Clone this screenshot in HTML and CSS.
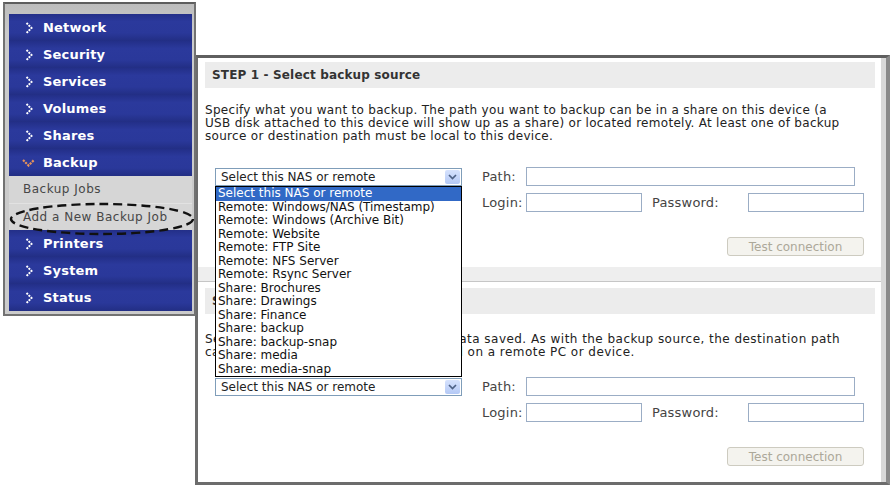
FILE: index.html
```html
<!DOCTYPE html>
<html lang="en">
<head>
<meta charset="utf-8">
<title>Add a New Backup Job</title>
<link rel="stylesheet" href="styles.css">
</head>
<body>
<div class="page">
  <nav class="sidebar">
    <ul class="menu">
      <li class="menu-item"><svg class="chev" viewBox="0 0 8 12"><polyline points="1.5,1 6.5,6 1.5,11"/></svg>Network</li>
      <li class="menu-item"><svg class="chev" viewBox="0 0 8 12"><polyline points="1.5,1 6.5,6 1.5,11"/></svg>Security</li>
      <li class="menu-item"><svg class="chev" viewBox="0 0 8 12"><polyline points="1.5,1 6.5,6 1.5,11"/></svg>Services</li>
      <li class="menu-item"><svg class="chev" viewBox="0 0 8 12"><polyline points="1.5,1 6.5,6 1.5,11"/></svg>Volumes</li>
      <li class="menu-item"><svg class="chev" viewBox="0 0 8 12"><polyline points="1.5,1 6.5,6 1.5,11"/></svg>Shares</li>
      <li class="menu-item menu-item--open"><svg class="chev-down" viewBox="0 0 13 8"><polyline points="1,1 6.5,6.5 12,1"/></svg>Backup</li>
      <li class="sub-item">Backup Jobs</li>
      <li class="sub-item">Add a New Backup Job</li>
      <li class="menu-item"><svg class="chev" viewBox="0 0 8 12"><polyline points="1.5,1 6.5,6 1.5,11"/></svg>Printers</li>
      <li class="menu-item"><svg class="chev" viewBox="0 0 8 12"><polyline points="1.5,1 6.5,6 1.5,11"/></svg>System</li>
      <li class="menu-item"><svg class="chev" viewBox="0 0 8 12"><polyline points="1.5,1 6.5,6 1.5,11"/></svg>Status</li>
    </ul>
    <svg class="callout" viewBox="0 0 195 42"><ellipse cx="97" cy="20" rx="91" ry="15"/></svg>
  </nav>

  <main class="panel">
    <section class="step step--source">
      <h2 class="step-title">STEP 1 - Select backup source</h2>
      <p class="step-text step-text--source">Specify what you want to backup. The path you want to backup can be in a share on this device (a<br>USB disk attached to this device will show up as a share) or located remotely. At least one of backup<br>source or destination path must be local to this device.</p>
      <div class="form">
        <div class="select-wrap">
          <div class="select"><span class="select-value">Select this NAS or remote</span><span class="select-arrow"><svg viewBox="0 0 9 6"><polyline points="1,1 4.5,4.5 8,1"/></svg></span></div>
          <ul class="options">
            <li class="option option--active">Select this NAS or remote</li>
            <li class="option">Remote: Windows/NAS (Timestamp)</li>
            <li class="option">Remote: Windows (Archive Bit)</li>
            <li class="option">Remote: Website</li>
            <li class="option">Remote: FTP Site</li>
            <li class="option">Remote: NFS Server</li>
            <li class="option">Remote: Rsync Server</li>
            <li class="option">Share: Brochures</li>
            <li class="option">Share: Drawings</li>
            <li class="option">Share: Finance</li>
            <li class="option">Share: backup</li>
            <li class="option">Share: backup-snap</li>
            <li class="option">Share: media</li>
            <li class="option">Share: media-snap</li>
          </ul>
        </div>
        <div class="fields">
          <div class="field-row">
            <label class="label">Path:</label><input class="input input--path" type="text">
          </div>
          <div class="field-row field-row--login">
            <label class="label">Login:</label><input class="input input--short" type="text">
            <label class="label label--password">Password:</label><input class="input input--short" type="password">
          </div>
          <div class="field-row field-row--action">
            <button class="test-btn" type="button" disabled>Test connection</button>
          </div>
        </div>
      </div>
    </section>

    <div class="divider"></div>

    <section class="step step--dest">
      <h2 class="step-title">STEP 2 - Select backup destination</h2>
      <p class="step-text step-text--dest">Select where you want all the backup data saved. As with the backup source, the destination path<br>can be a share on this device, or placed on a remote PC or device.</p>
      <div class="form">
        <div class="select-wrap">
          <div class="select"><span class="select-value">Select this NAS or remote</span><span class="select-arrow"><svg viewBox="0 0 9 6"><polyline points="1,1 4.5,4.5 8,1"/></svg></span></div>
        </div>
        <div class="fields">
          <div class="field-row">
            <label class="label">Path:</label><input class="input input--path" type="text">
          </div>
          <div class="field-row field-row--login">
            <label class="label">Login:</label><input class="input input--short" type="text">
            <label class="label label--password">Password:</label><input class="input input--short" type="password">
          </div>
          <div class="field-row field-row--action">
            <button class="test-btn" type="button" disabled>Test connection</button>
          </div>
        </div>
      </div>
    </section>
  </main>
</div>
</body>
</html>
```

FILE: styles.css
```css
* {
  box-sizing: border-box;
}

body {
  margin: 0;
  background: #ffffff;
  font-family: "DejaVu Sans", Verdana, sans-serif;
  color: #222222;
}

.page {
  display: flex;
  align-items: flex-start;
}

/* ---------- side navigation ---------- */

.sidebar {
  position: relative;
  flex: none;
  width: 193px;
  margin: 2px 0 0 3px;
  padding: 10px 2px 3px 4px;
  background: linear-gradient(#bdbdbd, #cbcbcb 30px, #cbcbcb);
  border: 2px solid #727272;
  border-top-color: #5e5e5e;
}

.menu {
  list-style: none;
  margin: 0;
  padding: 0;
}

.menu-item {
  display: flex;
  align-items: center;
  height: 27px;
  padding-left: 16px;
  background: linear-gradient(#232f88 0%, #2b399c 28%, #2a389a 70%, #222e84 100%);
  color: #ffffff;
  font-weight: bold;
  font-size: 13px;
  letter-spacing: 0.2px;
}

.chev {
  width: 8px;
  height: 12px;
  margin-right: 10px;
  fill: none;
  stroke: #ffffff;
  stroke-width: 2;
  stroke-dasharray: 2 1;
}

.menu-item--open {
  padding-left: 13px;
}

.chev-down {
  width: 13px;
  height: 8px;
  margin-right: 8px;
  fill: none;
  stroke: #e8935a;
  stroke-width: 2.2;
  stroke-dasharray: 2.2 1;
}

.sub-item {
  height: 27px;
  line-height: 27px;
  padding-left: 14px;
  background: #d6d6d6;
  color: #474747;
  font-size: 12px;
  letter-spacing: 0.5px;
}

.sub-item + .sub-item {
  border-top: 1px solid #e2e2e2;
  line-height: 26px;
}

/* dashed ring drawn around the current menu entry */
.callout {
  position: absolute;
  left: 0;
  top: 195px;
  width: 195px;
  height: 42px;
  overflow: visible;
  fill: none;
  stroke: #111111;
  stroke-width: 2.4;
  stroke-dasharray: 9 5;
}

/* ---------- content panel ---------- */

.panel {
  flex: none;
  width: 695px;
  margin: 55px 0 0 -1px;
  padding-top: 4px;
  background: #ffffff;
  border: 3px solid #6c6c6c;
  border-right: 4px solid #8a8a8a;
  border-top-color: #5f5f5f;
  box-shadow: inset -5px 0 0 #d9d9d9;
}

.step {
  padding: 0 11px 0 7px;
}

.step--source {
  padding-bottom: 11px;
}

.step--dest {
  padding-top: 6px;
  padding-bottom: 16px;
}

.step-title {
  margin: 0;
  height: 26px;
  line-height: 27px;
  padding-left: 7px;
  background: #ececec;
  color: #333333;
  font-size: 12px;
  font-weight: bold;
  letter-spacing: 0.15px;
}

.step-text {
  margin: 16px 0 24px;
  font-size: 12px;
  line-height: 13px;
  letter-spacing: 0.3px;
  color: #222222;
  white-space: nowrap;
}

.step-text--dest {
  margin-top: 19px;
  margin-bottom: 18px;
  letter-spacing: 0.46px;
}

.divider {
  height: 15px;
  background: #eeeeee;
  border-bottom: 1px solid #c6c6c6;
  margin-right: 5px;
}

.form {
  display: flex;
  align-items: flex-start;
  padding-left: 10px;
}

/* drop-down box */
.select-wrap {
  position: relative;
  width: 247px;
  margin-top: 1px;
  margin-right: 20px;
}

.select {
  display: flex;
  align-items: center;
  justify-content: space-between;
  height: 18px;
  padding-left: 5px;
  border: 1px solid #7f9db9;
  background: #ffffff;
  font-size: 12px;
  color: #222222;
}

.select-arrow {
  display: flex;
  align-items: center;
  justify-content: center;
  width: 15px;
  height: 14px;
  margin-right: 1px;
  background: linear-gradient(#d6e2fd, #b4c9f6);
  border-radius: 2px;
}

.select-arrow svg {
  width: 9px;
  height: 6px;
  fill: none;
  stroke: #4d6185;
  stroke-width: 1.7;
}

.options {
  position: absolute;
  z-index: 2;
  top: 100%;
  left: 0;
  width: 100%;
  list-style: none;
  margin: 0;
  padding: 0;
  background: #ffffff;
  border: 1px solid #000000;
}

.option {
  height: 13.5px;
  line-height: 13.5px;
  padding-left: 2px;
  font-size: 12px;
  color: #111111;
  white-space: nowrap;
}

.option--active {
  background: #3169c6;
  color: #ffffff;
}

/* connection fields */
.fields {
  width: 382px;
}

.field-row {
  display: flex;
  align-items: center;
  height: 19px;
}

.field-row--login {
  margin-top: 7px;
}

.field-row--action {
  margin-top: 25px;
  justify-content: flex-end;
}

.label {
  width: 44px;
  font-size: 13px;
  letter-spacing: 0.2px;
  color: #444444;
}

.label--password {
  width: 96px;
  margin-left: 10px;
}

.input {
  height: 19px;
  margin: 0;
  padding: 0 2px;
  border: 1px solid #9badc5;
  background: #ffffff;
  font: 12px "DejaVu Sans", Verdana, sans-serif;
}

.input--path {
  width: 329px;
}

.input--short {
  width: 116px;
}

.test-btn {
  width: 137px;
  height: 19px;
  padding: 0;
  background: #f4f3ee;
  border: 1px solid #cdcbc0;
  border-radius: 3px;
  color: #aca899;
  font: 12px "DejaVu Sans", Verdana, sans-serif;
}
```
